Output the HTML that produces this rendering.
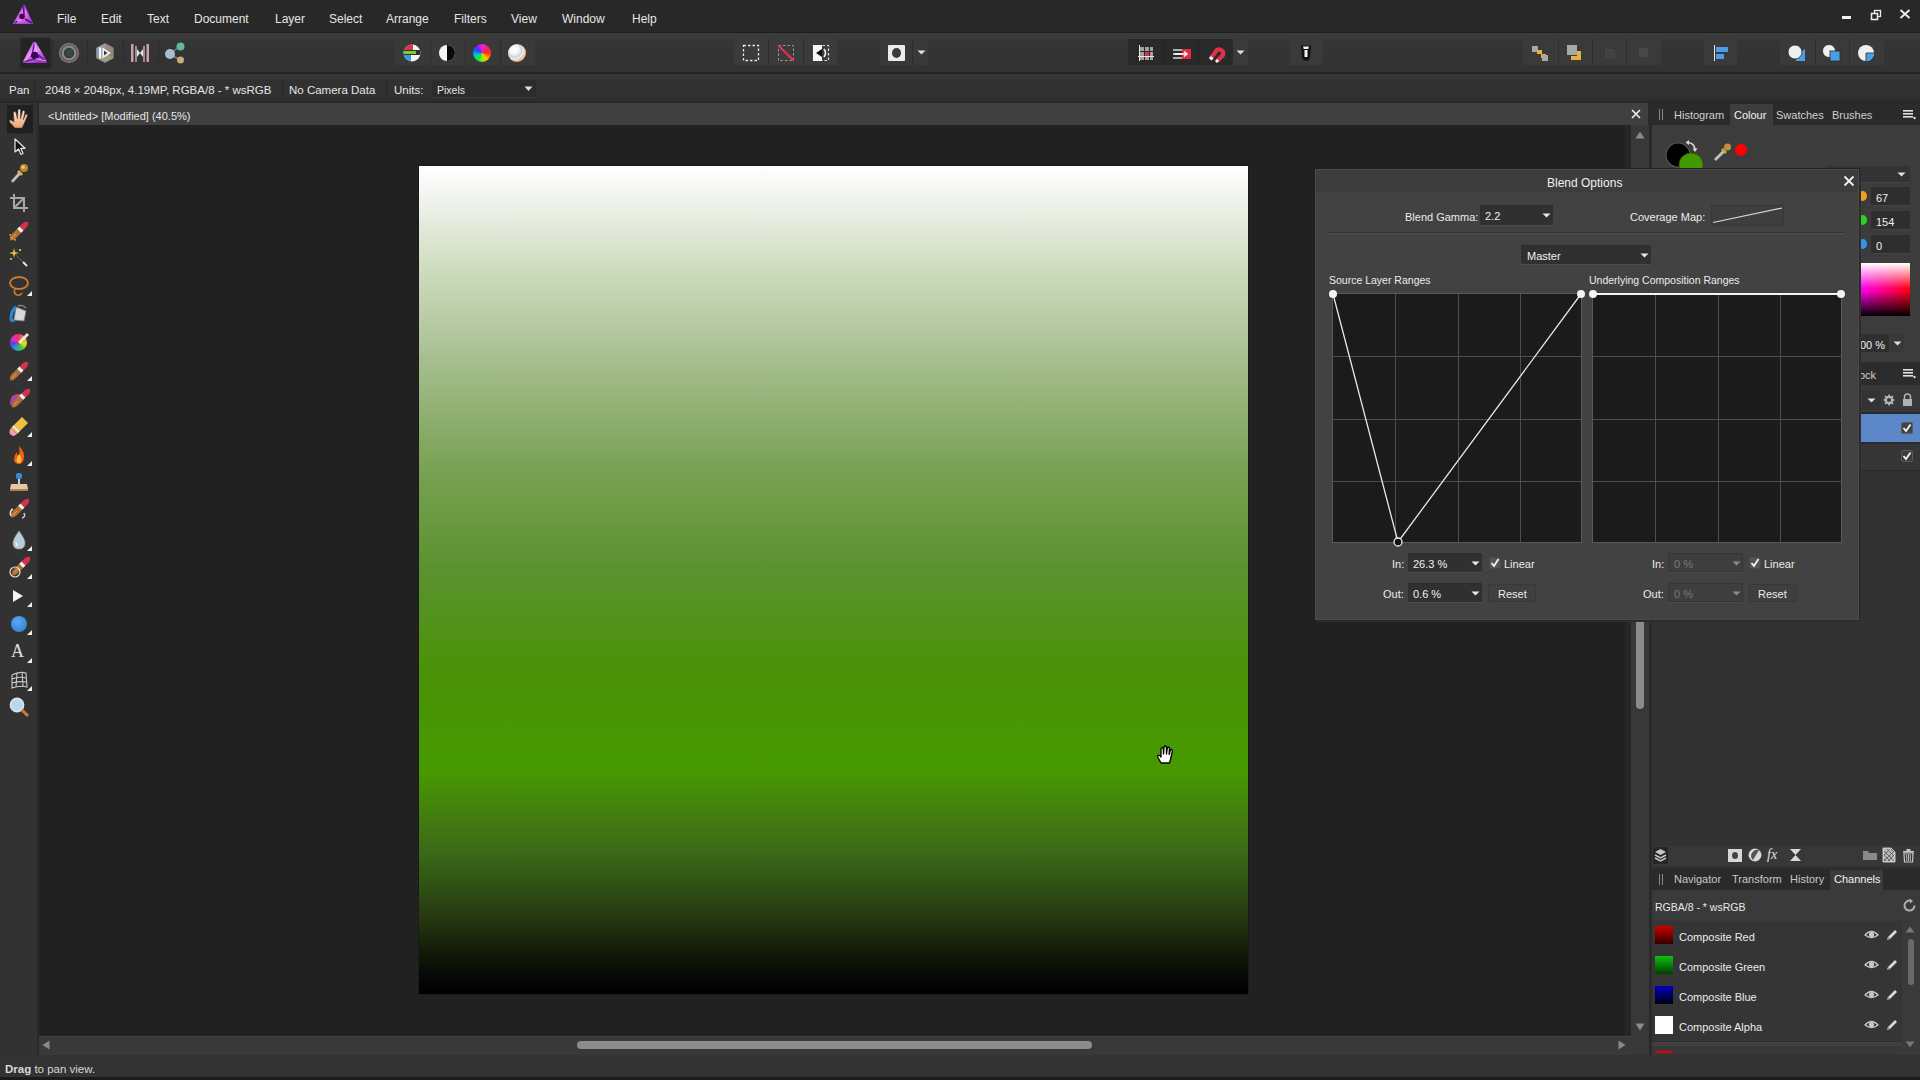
<!DOCTYPE html>
<html><head><meta charset="utf-8">
<style>
*{margin:0;padding:0;box-sizing:border-box}
html,body{width:1920px;height:1080px;overflow:hidden;background:#2b2b2b;font-family:"Liberation Sans",sans-serif;color:#e6e6e6}
.a{position:absolute}
.t{position:absolute;white-space:nowrap;line-height:20px;font-family:"Liberation Sans",sans-serif}
svg.a{overflow:visible}
</style></head><body>
<div class="a" style="left:0px;top:0px;width:1920px;height:32px;background:#282828;"></div>
<div class="a" style="left:0px;top:32px;width:1920px;height:1px;background:#1e1e1e;"></div>
<div class="a" style="left:0px;top:33px;width:1920px;height:40px;background:linear-gradient(#3a3a3a 0px,#3b3b3b 4px,#363636 8px,#343434 16px,#323232 40px);"></div>
<div class="a" style="left:0px;top:72px;width:1920px;height:2px;background:#232323;"></div>
<div class="a" style="left:0px;top:74px;width:1920px;height:28px;background:linear-gradient(#373737 0px,#363636 3px,#313131 6px,#313131 23px,#2c2c2c 26px,#2a2a2a 28px);"></div>
<div class="a" style="left:0px;top:102px;width:1920px;height:1px;background:#262626;"></div>
<div class="a" style="left:0px;top:103px;width:37px;height:952px;background:#323232;"></div>
<div class="a" style="left:37px;top:103px;width:2px;height:952px;background:#2a2a2a;"></div>
<div class="a" style="left:39px;top:103px;width:1609px;height:22px;background:#404040;"></div>
<div class="a" style="left:39px;top:125px;width:1586px;height:911px;background:#212121;"></div>
<div class="a" style="left:1625px;top:125px;width:6px;height:911px;background:#262626;"></div>
<div class="a" style="left:1631px;top:125px;width:18px;height:911px;background:#383838;"></div>
<div class="a" style="left:39px;top:1036px;width:1592px;height:19px;background:#393939;"></div>
<div class="a" style="left:1631px;top:1036px;width:18px;height:19px;background:#383838;"></div>
<div class="a" style="left:1649px;top:103px;width:3px;height:952px;background:#2a2a2a;"></div>
<div class="a" style="left:1652px;top:103px;width:268px;height:952px;background:#303030;"></div>
<div class="a" style="left:0px;top:1055px;width:1920px;height:22px;background:#333333;"></div>
<div class="a" style="left:0px;top:1077px;width:1920px;height:3px;background:#1b1b1b;"></div>
<div class="t" style="left:57px;top:9px;font-size:12px;color:#e6e6e6;font-weight:normal;">File</div>
<div class="t" style="left:101px;top:9px;font-size:12px;color:#e6e6e6;font-weight:normal;">Edit</div>
<div class="t" style="left:147px;top:9px;font-size:12px;color:#e6e6e6;font-weight:normal;">Text</div>
<div class="t" style="left:194px;top:9px;font-size:12px;color:#e6e6e6;font-weight:normal;">Document</div>
<div class="t" style="left:275px;top:9px;font-size:12px;color:#e6e6e6;font-weight:normal;">Layer</div>
<div class="t" style="left:329px;top:9px;font-size:12px;color:#e6e6e6;font-weight:normal;">Select</div>
<div class="t" style="left:386px;top:9px;font-size:12px;color:#e6e6e6;font-weight:normal;">Arrange</div>
<div class="t" style="left:454px;top:9px;font-size:12px;color:#e6e6e6;font-weight:normal;">Filters</div>
<div class="t" style="left:511px;top:9px;font-size:12px;color:#e6e6e6;font-weight:normal;">View</div>
<div class="t" style="left:562px;top:9px;font-size:12px;color:#e6e6e6;font-weight:normal;">Window</div>
<div class="t" style="left:632px;top:9px;font-size:12px;color:#e6e6e6;font-weight:normal;">Help</div>
<div class="t" style="left:9px;top:80px;font-size:11.5px;color:#e6e6e6;font-weight:normal;">Pan</div>
<div class="a" style="left:34px;top:80px;width:1px;height:19px;background:#262626;"></div>
<div class="t" style="left:45px;top:80px;font-size:11.5px;color:#e6e6e6;font-weight:normal;">2048 × 2048px, 4.19MP, RGBA/8 - * wsRGB</div>
<div class="a" style="left:282px;top:80px;width:1px;height:19px;background:#262626;"></div>
<div class="t" style="left:289px;top:80px;font-size:11.5px;color:#e6e6e6;font-weight:normal;">No Camera Data</div>
<div class="a" style="left:386px;top:80px;width:1px;height:19px;background:#262626;"></div>
<div class="t" style="left:394px;top:80px;font-size:11.5px;color:#e6e6e6;font-weight:normal;">Units:</div>
<div class="a" style="left:432px;top:80px;width:104px;height:18px;background:#2b2b2b;border-bottom:1px solid #3c3c3c"></div>
<div class="t" style="left:437px;top:80px;font-size:10.5px;color:#e6e6e6;font-weight:normal;">Pixels</div>
<svg class="a" style="left:524px;top:86px;" width="9" height="6" viewBox="0 0 9 6"><path d="M0.5 0.5 L8.5 0.5 L4.5 5 Z" fill="#e0e0e0"/></svg>
<div class="t" style="left:48px;top:106px;font-size:11px;color:#e6e6e6;font-weight:normal;">&lt;Untitled&gt; [Modified] (40.5%)</div>
<svg class="a" style="left:1631px;top:109px;" width="10" height="10" viewBox="0 0 10 10"><path d="M1 1 L9 9 M9 1 L1 9" stroke="#f0f0f0" stroke-width="1.6"/></svg>
<div class="t" style="left:5px;top:1059px;font-size:11.5px;color:#d8d8d8;font-weight:normal;"><b>Drag</b> to pan view.</div>
<div class="a" style="left:418px;top:165px;width:831px;height:830px;background:#1a1a1a;"></div>
<div class="a" style="left:419px;top:166px;width:829px;height:828px;background:linear-gradient(#ffffff 0%,#f4f6f2 3%,#cad9ba 13.4%,#a2bb8a 24.6%,#78a152 36.8%,#5b922f 48.6%,#4b9208 61.2%,#469a00 73%,#437a10 79.1%,#3a6a18 82.9%,#283e10 90%,#141c08 94.7%,#050805 98%,#000 100%);"></div>
<svg class="a" style="left:1156px;top:745px;" width="18" height="20" viewBox="0 0 18 20"><path d="M5 18 L2 12.5 Q1 10.5 2.5 10.3 Q3.7 10.2 5 12 L5 4 Q5 2.6 6.2 2.6 Q7.3 2.6 7.3 4 L7.5 9 L8 2.2 Q8.1 1 9.2 1 Q10.4 1 10.4 2.2 L10.5 9 L11.3 3 Q11.5 2 12.5 2.1 Q13.6 2.3 13.4 3.4 L13.2 9.5 L14.4 5.2 Q14.8 4.3 15.7 4.6 Q16.6 5 16.4 6 L14.6 14 L13.5 18 Z" fill="#fff" stroke="#000" stroke-width="1.3" stroke-linejoin="round"/></svg>
<svg class="a" style="left:1635px;top:131px;" width="10" height="8" viewBox="0 0 10 8"><path d="M0.5 7.5 L9.5 7.5 L5 0.5Z" fill="#8a8a8a"/></svg>
<div class="a" style="left:1636px;top:300px;width:8px;height:409px;background:#8c8c8c;border-radius:4px"></div>
<svg class="a" style="left:1635px;top:1023px;" width="10" height="8" viewBox="0 0 10 8"><path d="M0.5 0.5 L9.5 0.5 L5 7.5Z" fill="#8a8a8a"/></svg>
<div class="a" style="left:39px;top:1036px;width:1592px;height:1px;background:#444;"></div>
<svg class="a" style="left:42px;top:1040px;" width="8" height="10" viewBox="0 0 8 10"><path d="M7.5 0.5 L7.5 9.5 L0.5 5Z" fill="#8a8a8a"/></svg>
<div class="a" style="left:577px;top:1041px;width:515px;height:8px;background:#8c8c8c;border-radius:4px"></div>
<svg class="a" style="left:1618px;top:1040px;" width="8" height="10" viewBox="0 0 8 10"><path d="M0.5 0.5 L0.5 9.5 L7.5 5Z" fill="#8a8a8a"/></svg>
<svg class="a" style="left:12px;top:4px;" width="22" height="22" viewBox="0 0 22 22"><defs><linearGradient id="lg0" x1="0" y1="0" x2="1" y2="1"><stop offset="0" stop-color="#8a40e0"/><stop offset=".5" stop-color="#f078f0"/><stop offset="1" stop-color="#9030c0"/></linearGradient></defs><path d="M11.5 1.5 Q12 1 12.5 1.5 L20.5 19.5 L1.5 19.5 Z" fill="url(#lg0)" stroke="#a048e0" stroke-linejoin="round" stroke-width="1"/><path d="M3 19 L10 13 M11.5 2 L12 11 M20 19 L13 15" stroke="#5a1080" stroke-width="1.6"/><circle cx="10" cy="12.5" r="2.8" fill="#3a0048"/><path d="M5 17 L9 15" stroke="#ffb0ff" stroke-width="1.2"/></svg>
<div class="a" style="left:1842px;top:16px;width:9px;height:3px;background:#f2f2f2;"></div>
<svg class="a" style="left:1870px;top:9px;" width="12" height="12" viewBox="0 0 12 12"><rect x="4.5" y="1.5" width="6" height="6" fill="none" stroke="#eee" stroke-width="1.3"/><rect x="1.5" y="4.5" width="6" height="6" fill="#282828" stroke="#eee" stroke-width="1.5"/></svg>
<svg class="a" style="left:1899px;top:9px;" width="12" height="10" viewBox="0 0 12 10"><path d="M1.5 1 L10.5 9 M10.5 1 L1.5 9" stroke="#eee" stroke-width="1.8"/></svg>
<div class="a" style="left:21px;top:38px;width:29px;height:29px;background:#242424;box-shadow:0 1px 2px #1a1a1a"></div>
<div class="a" style="left:52px;top:40px;width:1px;height:26px;background:#2b2b2b;"></div>
<div class="a" style="left:87px;top:40px;width:1px;height:26px;background:#2b2b2b;"></div>
<div class="a" style="left:123px;top:40px;width:1px;height:26px;background:#2b2b2b;"></div>
<div class="a" style="left:158px;top:40px;width:1px;height:26px;background:#2b2b2b;"></div>
<svg class="a" style="left:22px;top:40px;" width="27" height="26" viewBox="0 0 27 26"><defs><linearGradient id="pp" x1="0" y1="0" x2="0.6" y2="1"><stop offset="0" stop-color="#b050e8"/><stop offset=".55" stop-color="#e488f6"/><stop offset="1" stop-color="#9a2cc8"/></linearGradient></defs><path d="M11 2.5 Q12.5 1 14 2.5 L25 21 Q25.5 23 23.5 23 L2.5 23 Q0.5 23 1.2 21 Z" fill="url(#pp)"/><path d="M12.5 2.5 L10 15.5 M24.5 22 L13 12 M1.8 22 L17 17.5" stroke="#6a1a90" stroke-width="1.4"/><path d="M12.5 3 L15 13 M24 21 L12 18 M2.5 21.5 L10 12" stroke="#f6c8ff" stroke-width="0.9" opacity=".85"/><path d="M10 12 L15 12 L17 17 L12 19.5 L8.5 16.5 Z" fill="#3c0658"/></svg>
<svg class="a" style="left:58px;top:42px;" width="22" height="22" viewBox="0 0 22 22"><circle cx="11" cy="11" r="9" fill="none" stroke="#8a6c6c" stroke-width="2.4" opacity=".9"/><circle cx="11" cy="11" r="6.3" fill="none" stroke="#7c9488" stroke-width="2.2"/><circle cx="11" cy="11" r="4" fill="#3a4548"/></svg>
<svg class="a" style="left:94px;top:42px;" width="22" height="22" viewBox="0 0 22 22"><path d="M11 1.5 L19.5 6 L19.5 16 L11 20.5 L2.5 16 L2.5 6 Z" fill="#8a8a70" stroke="#6e6e60" stroke-width="1"/><path d="M11 1.5 L19.5 6 L11 11 Z" fill="#a08488"/><path d="M2.5 6 L11 1.5 L11 11 L2.5 16Z" fill="#9898b8"/><path d="M11 11 L19.5 16 L11 20.5 L2.5 16Z" fill="#98a080"/><rect x="5" y="5.5" width="2.2" height="11" fill="#f4f4f4"/><path d="M8.5 5.5 L17 11 L8.5 16.5 Z" fill="#f4f4f4"/><path d="M10 8.5 L13.5 11 L10 13.5 Z" fill="#3a3a3a"/></svg>
<svg class="a" style="left:129px;top:42px;" width="22" height="22" viewBox="0 0 22 22"><rect x="2" y="2" width="2.5" height="18" fill="#c8a0a8"/><rect x="6" y="4" width="2" height="16" fill="#a08898"/><rect x="17.5" y="2" width="2.5" height="18" fill="#c8a0a8"/><rect x="14" y="4" width="2" height="16" fill="#a08898"/><path d="M8 7 L11 11 L8 15 Z M14 7 L11 11 L14 15Z" fill="#e8e8e8"/></svg>
<svg class="a" style="left:163px;top:42px;" width="22" height="22" viewBox="0 0 22 22"><path d="M7 12 L17 4 M7 12 L17 18" stroke="#70807c" stroke-width="1.5"/><circle cx="7" cy="12" r="5" fill="#a8c0cc"/><circle cx="17.5" cy="4.5" r="4" fill="#5fb8a0"/><circle cx="17.5" cy="18" r="3.5" fill="#c8aa78"/></svg>
<div class="a" style="left:395px;top:39px;width:140px;height:26px;background:#393939;"></div>
<div class="a" style="left:430px;top:39px;width:1px;height:26px;background:#2e2e2e;"></div>
<div class="a" style="left:465px;top:39px;width:1px;height:26px;background:#2e2e2e;"></div>
<div class="a" style="left:500px;top:39px;width:1px;height:26px;background:#2e2e2e;"></div>
<svg class="a" style="left:402px;top:43px;" width="20" height="20" viewBox="0 0 20 20"><defs><clipPath id="c1"><circle cx="10" cy="10" r="8.5"/></clipPath></defs><g clip-path="url(#c1)"><rect x="0" y="0" width="20" height="20" fill="#f4f4f4"/><rect x="0" y="0" width="11" height="7" fill="#e03050"/><rect x="0" y="7" width="20" height="5" fill="#303030"/><rect x="1" y="8" width="13" height="3" fill="#7ad030"/><rect x="0" y="12" width="9" height="8" fill="#3898e0"/></g></svg>
<svg class="a" style="left:437px;top:43px;" width="20" height="20" viewBox="0 0 20 20"><circle cx="10" cy="10" r="8" fill="#f6f6f6"/><path d="M10 2 A8 8 0 0 1 10 18 Z" fill="#0a0a0a"/></svg>
<div class="a" style="left:473px;top:44px;width:18px;height:18px;border-radius:50%;background:conic-gradient(from 0deg,#f020e0,#ff2060 50deg,#ff3010 90deg,#ffc000 140deg,#a0f000 170deg,#20e040 210deg,#00d0c0 250deg,#1060ff 290deg,#7020ff 320deg,#f020e0)"></div>
<div class="a" style="left:508px;top:44px;width:18px;height:18px;border-radius:50%;background:radial-gradient(circle at 35% 32%,#ffffff 0%,#f4f8fc 25%,#c0daf0 42%,#f6e6d8 55%,#e8a878 75%,#b86a38 100%)"></div>
<div class="a" style="left:734px;top:39px;width:103px;height:26px;background:#3b3b3b;"></div>
<div class="a" style="left:768px;top:39px;width:1px;height:26px;background:#2e2e2e;"></div>
<div class="a" style="left:803px;top:39px;width:1px;height:26px;background:#2e2e2e;"></div>
<svg class="a" style="left:742px;top:44px;" width="18" height="18" viewBox="0 0 18 18"><rect x="1.5" y="1.5" width="15" height="15" fill="none" stroke="#e8e8e8" stroke-width="1.3" stroke-dasharray="2.5 2"/></svg>
<svg class="a" style="left:777px;top:44px;" width="18" height="18" viewBox="0 0 18 18"><rect x="1.5" y="1.5" width="15" height="15" fill="none" stroke="#9a9a9a" stroke-width="1" stroke-dasharray="2.5 2"/><path d="M2 2 L16 16" stroke="#e03048" stroke-width="2.4" stroke-linecap="round"/></svg>
<svg class="a" style="left:812px;top:44px;" width="18" height="18" viewBox="0 0 18 18"><rect x="1.5" y="1.5" width="15" height="15" fill="none" stroke="#e0e0e0" stroke-width="1.2" stroke-dasharray="2.5 2"/><rect x="1" y="1" width="9" height="16" fill="#f6f6f6"/><path d="M10 5 L4 9 L10 13 Z" fill="#101010"/><path d="M12 5 Q15 9 12 13" fill="none" stroke="#f0f0f0" stroke-width="1.6"/></svg>
<div class="a" style="left:880px;top:39px;width:48px;height:26px;background:#393939;"></div>
<div class="a" style="left:912px;top:39px;width:1px;height:26px;background:#2e2e2e;"></div>
<div class="a" style="left:888px;top:45px;width:17px;height:16px;background:#ececec;border-radius:1px"></div>
<div class="a" style="left:892px;top:48px;width:9px;height:10px;background:#3a3a3a;border-radius:50%"></div>
<svg class="a" style="left:917px;top:50px;" width="9" height="5" viewBox="0 0 9 5"><path d="M0.5 0.5 L8.5 0.5 L4.5 4.5Z" fill="#e0e0e0"/></svg>
<div class="a" style="left:1128px;top:39px;width:105px;height:26px;background:#292929;"></div>
<div class="a" style="left:1163px;top:39px;width:1px;height:26px;background:#242424;"></div>
<div class="a" style="left:1198px;top:39px;width:1px;height:26px;background:#242424;"></div>
<div class="a" style="left:1233px;top:39px;width:15px;height:26px;background:#3a3a3a;"></div>
<svg class="a" style="left:1236px;top:50px;" width="9" height="5" viewBox="0 0 9 5"><path d="M0.5 0.5 L8.5 0.5 L4.5 4.5Z" fill="#e0e0e0"/></svg>
<svg class="a" style="left:1137px;top:44px;" width="18" height="18" viewBox="0 0 18 18"><rect x="3" y="3" width="4" height="4" fill="#a0a0a0"/><rect x="8" y="3" width="4" height="4" fill="#a0a0a0"/><rect x="13" y="3" width="3" height="4" fill="#a0a0a0"/><rect x="3" y="8" width="4" height="4" fill="#a0a0a0"/><rect x="8" y="8" width="4" height="4" fill="#e03040"/><rect x="13" y="8" width="3" height="4" fill="#a0a0a0"/><rect x="3" y="13" width="4" height="3" fill="#a0a0a0"/><rect x="8" y="13" width="4" height="3" fill="#a0a0a0"/><rect x="13" y="13" width="3" height="3" fill="#a0a0a0"/><path d="M1 12.5 L17 12.5 M2.5 1 L2.5 17" stroke="#e8e8e8" stroke-width="1"/></svg>
<svg class="a" style="left:1172px;top:44px;" width="20" height="18" viewBox="0 0 20 18"><rect x="1" y="5" width="9" height="2" fill="#b0b0b0"/><rect x="1" y="9" width="9" height="2" fill="#c0c0c0"/><rect x="1" y="13" width="9" height="2" fill="#b0b0b0"/><rect x="10" y="5" width="9" height="10" fill="#e03040"/><path d="M3 10 L15 10 M12 7.5 L15 10 L12 12.5" stroke="#fff" stroke-width="1.3" fill="none"/></svg>
<svg class="a" style="left:1207px;top:43px;" width="20" height="20" viewBox="0 0 20 20"><path d="M4 15 L10 7 A4.2 4.2 0 0 1 16 12 L10 18" fill="none" stroke="#e0304a" stroke-width="4.2"/><path d="M3 14 L5.5 16.5 M9 17 L11 19" stroke="#f0f0f0" stroke-width="3"/></svg>
<div class="a" style="left:1290px;top:39px;width:33px;height:26px;background:#3a3a3a;"></div>
<svg class="a" style="left:1299px;top:44px;" width="14" height="18" viewBox="0 0 14 18"><path d="M2 1.5 L12 1.5 L11 13 L9.5 16.5 L4.5 16.5 L3 13 Z" fill="#111"/><path d="M4 2.5 L10 2.5 L9.3 5 L4.7 5Z" fill="#f4f4f4"/><rect x="5.5" y="6" width="3" height="7" fill="#f4f4f4"/></svg>
<div class="a" style="left:1523px;top:39px;width:138px;height:26px;background:#3a3a3a;"></div>
<div class="a" style="left:1558px;top:39px;width:1px;height:26px;background:#2e2e2e;"></div>
<div class="a" style="left:1592px;top:39px;width:1px;height:26px;background:#2e2e2e;"></div>
<div class="a" style="left:1626px;top:39px;width:1px;height:26px;background:#2e2e2e;"></div>
<svg class="a" style="left:1530px;top:44px;" width="20" height="18" viewBox="0 0 20 18"><rect x="2" y="2" width="6" height="6" fill="#a8a8a8"/><path d="M7 6 L12 6 L12 10 L16 10 L16 14 L11 14 L11 10 L7 10Z" fill="#e8b040"/><rect x="12" y="11" width="6" height="6" fill="#a8a8a8"/></svg>
<svg class="a" style="left:1565px;top:44px;" width="20" height="18" viewBox="0 0 20 18"><rect x="2" y="1" width="10" height="10" fill="#a8a8a8"/><path d="M12 7 L16 7 L16 16 L6 16 L6 12 L12 12Z" fill="#e8b040"/></svg>
<svg class="a" style="left:1600px;top:44px;" width="20" height="18" viewBox="0 0 20 18"><rect x="5" y="5" width="9" height="9" fill="#454545"/><rect x="7" y="7" width="9" height="8" fill="#424242"/></svg>
<svg class="a" style="left:1635px;top:44px;" width="20" height="18" viewBox="0 0 20 18"><rect x="4" y="4" width="9" height="9" fill="#474747"/></svg>
<div class="a" style="left:1704px;top:39px;width:33px;height:26px;background:#3a3a3a;"></div>
<svg class="a" style="left:1711px;top:44px;" width="20" height="18" viewBox="0 0 20 18"><rect x="3" y="1" width="1" height="16" fill="#e8e8e8"/><rect x="5" y="3" width="12" height="5" fill="#4a9ee8"/><rect x="5" y="10" width="8" height="5" fill="#4a9ee8"/></svg>
<div class="a" style="left:1780px;top:39px;width:104px;height:26px;background:#3a3a3a;"></div>
<div class="a" style="left:1815px;top:39px;width:1px;height:26px;background:#2e2e2e;"></div>
<div class="a" style="left:1849px;top:39px;width:1px;height:26px;background:#2e2e2e;"></div>
<svg class="a" style="left:1786px;top:43px;" width="22" height="20" viewBox="0 0 22 20"><path d="M10 12 L19 6 L19 18 L10 18Z" fill="#4a9ee8"/><circle cx="9" cy="9" r="7" fill="#efefef" stroke="#2a2a2a" stroke-width="0.8"/></svg>
<svg class="a" style="left:1821px;top:43px;" width="22" height="20" viewBox="0 0 22 20"><circle cx="8" cy="8" r="6.5" fill="#efefef" stroke="#2a2a2a" stroke-width="0.8"/><rect x="9" y="8" width="10" height="10" fill="#4a9ee8" stroke="#2a2a2a" stroke-width="0.8"/></svg>
<svg class="a" style="left:1856px;top:43px;" width="22" height="20" viewBox="0 0 22 20"><circle cx="10" cy="10" r="8" fill="#efefef"/><path d="M10 10 L18 10 A8 8 0 0 1 10 18 Z" fill="#4a9ee8"/><path d="M10 10 L18 10 M10 10 L10 18" stroke="#2a2a2a" stroke-width="0.8"/></svg>
<div class="a" style="left:7px;top:105px;width:26px;height:28px;background:#202020;box-shadow:0 1px 0 #2a2a2a"></div>
<svg class="a" style="left:7px;top:108px;" width="22" height="22" viewBox="0 0 22 22"><defs><linearGradient id="hg" x1="0" y1="0" x2="0" y2="1"><stop offset="0" stop-color="#fff0e0"/><stop offset="1" stop-color="#e8a070"/></linearGradient></defs><path d="M8 20 L3 14.5 Q1.5 12.5 3 12 Q4.5 11.8 7 14 L6.5 5 Q6.5 3.5 7.6 3.5 Q8.7 3.5 9 5 L10.5 11 L11 2.5 Q11.2 1 12.3 1 Q13.4 1 13.4 2.5 L13.5 11 L15.5 3.5 Q16 2.3 17 2.6 Q18 3 17.7 4.3 L16.2 12 L18.5 6.8 Q19.2 5.8 20 6.3 Q20.8 6.9 20.3 8 L16.5 17 L15 20 Z" fill="url(#hg)" stroke="#5a3a28" stroke-width="0.5"/></svg>
<svg class="a" style="left:13px;top:138px;" width="14" height="18" viewBox="0 0 14 18"><path d="M2 1 L2 14 L5.5 11 L8 16.5 L10 15.5 L7.8 10.3 L12 10.3 Z" fill="#111" stroke="#e8e8e8" stroke-width="1.2" stroke-linejoin="round"/></svg>
<svg class="a" style="left:8px;top:162px;" width="22" height="22" viewBox="0 0 22 22"><path d="M3 19 L11 10 L13 12 L5 20.5 Z" fill="#c8c8c8" stroke="#888" stroke-width="0.6"/><path d="M10 9 L14 13" stroke="#d8b060" stroke-width="3"/><circle cx="16" cy="6" r="4" fill="#b88a30"/><circle cx="15.2" cy="5.2" r="1.6" fill="#f0d080"/></svg>
<svg class="a" style="left:9px;top:193px;" width="20" height="20" viewBox="0 0 20 20"><path d="M5 1 L5 15 L19 15 M1 5 L15 5 L15 19 M5 15 L15 5" fill="none" stroke="#a8a8a8" stroke-width="2"/></svg>
<svg class="a" style="left:8px;top:220px;" width="22" height="22" viewBox="0 0 22 22"><g transform="translate(0 0)"><path d="M15 3 Q18 1 20 2 Q21 4 19 7 L15.5 10.5 L11.5 6.5 Z" fill="#d83048"/><path d="M11.5 6.5 L15.5 10.5 L13 13 L9 9 Z" fill="#f0f0f0"/><path d="M9 9 L13 13 L8 18 Q5 21 2.5 20.5 Q1.5 19.5 2 17 Q3 14 6 12 Z" fill="#b07030"/><path d="M4 18 L8 14" stroke="#e0a060" stroke-width="1"/></g><path d="M2 14 A7 7 0 0 0 8 20" fill="none" stroke="#e0a040" stroke-width="1.4" stroke-dasharray="2 1.5"/></svg>
<svg class="a" style="left:8px;top:247px;" width="22" height="22" viewBox="0 0 22 22"><path d="M6 6 L19 19" stroke="#2a2a2a" stroke-width="3"/><path d="M6 6 L19 19" stroke="#505050" stroke-width="1.6"/><path d="M15 15 L19 19" stroke="#e8e8e8" stroke-width="2"/><path d="M6 1 L7 5 L11 6 L7 7 L6 11 L5 7 L1 6 L5 5 Z" fill="#f0c030"/><circle cx="12" cy="3" r="1" fill="#f8e080"/><circle cx="3" cy="12" r="0.9" fill="#f8e080"/></svg>
<svg class="a" style="left:8px;top:275px;" width="22" height="22" viewBox="0 0 22 22"><ellipse cx="11" cy="8" rx="9" ry="6" fill="none" stroke="#c87a30" stroke-width="2"/><path d="M7 13 Q5 18 9 20 Q12 21 14 18" fill="none" stroke="#c87a30" stroke-width="1.6"/></svg>
<svg class="a" style="left:27px;top:291px;" width="5" height="5" viewBox="0 0 5 5"><path d="M0 5 L5 0 L5 5Z" fill="#f0f0f0"/></svg>
<svg class="a" style="left:8px;top:303px;" width="22" height="22" viewBox="0 0 22 22"><path d="M8 4 L18 8 L16 18 L6 17 Z" fill="#d8d8d8" stroke="#808080" stroke-width="0.8"/><path d="M8 4 Q3 8 3 15 Q3 19 6 17" fill="none" stroke="#2a8ad8" stroke-width="3"/><path d="M10 3 Q14 1 18 5" fill="none" stroke="#909090" stroke-width="1.2"/></svg>
<div class="a" style="left:10px;top:334px;width:17px;height:17px;border-radius:50%;background:conic-gradient(#f03060,#f0a020,#e0e020,#40c040,#20a0e0,#6040e0,#e030c0,#f03060)"></div>
<svg class="a" style="left:8px;top:331px;" width="22" height="22" viewBox="0 0 22 22"><path d="M19 2 L21 4 L12 13 L10 11 Z" fill="#e8e8e8"/><path d="M10 11 L12 13 L9 15 L8 14Z" fill="#a06a30"/></svg>
<svg class="a" style="left:8px;top:360px;" width="22" height="22" viewBox="0 0 22 22"><g transform="translate(0 0)"><path d="M15 3 Q18 1 20 2 Q21 4 19 7 L15.5 10.5 L11.5 6.5 Z" fill="#d83048"/><path d="M11.5 6.5 L15.5 10.5 L13 13 L9 9 Z" fill="#f0f0f0"/><path d="M9 9 L13 13 L8 18 Q5 21 2.5 20.5 Q1.5 19.5 2 17 Q3 14 6 12 Z" fill="#b07030"/><path d="M4 18 L8 14" stroke="#e0a060" stroke-width="1"/></g></svg>
<svg class="a" style="left:27px;top:376px;" width="5" height="5" viewBox="0 0 5 5"><path d="M0 5 L5 0 L5 5Z" fill="#f0f0f0"/></svg>
<svg class="a" style="left:8px;top:388px;" width="22" height="22" viewBox="0 0 22 22"><path d="M2 16 Q2 6 10 6 Q14 6 12 10 Q6 10 6 17 Z" fill="#d04080"/><path d="M4 18 Q3 10 9 9" fill="none" stroke="#8050c0" stroke-width="2"/><g transform="translate(2 -1)"><path d="M15 3 Q18 1 20 2 Q21 4 19 7 L15.5 10.5 L11.5 6.5 Z" fill="#d83048"/><path d="M11.5 6.5 L15.5 10.5 L13 13 L9 9 Z" fill="#f0f0f0"/><path d="M9 9 L13 13 L8 18 Q5 21 2.5 20.5 Q1.5 19.5 2 17 Q3 14 6 12 Z" fill="#b07030"/><path d="M4 18 L8 14" stroke="#e0a060" stroke-width="1"/></g></svg>
<svg class="a" style="left:8px;top:415px;" width="22" height="22" viewBox="0 0 22 22"><path d="M14 2 L20 8 L9 19 L3 13 Z" fill="#f0c040"/><path d="M3 13 L9 19 L6 21 Q3 21 1.5 18 Q1 15 3 13Z" fill="#f0a0b0"/><path d="M5 11 L11 17" stroke="#e8e8e8" stroke-width="2"/></svg>
<svg class="a" style="left:27px;top:432px;" width="5" height="5" viewBox="0 0 5 5"><path d="M0 5 L5 0 L5 5Z" fill="#f0f0f0"/></svg>
<svg class="a" style="left:8px;top:444px;" width="22" height="22" viewBox="0 0 22 22"><path d="M11 2 Q17 8 16 14 Q15 20 11 20 Q6 20 6 15 Q6 11 9 8 Q9 12 11 12 Q12 7 11 2Z" fill="#f06010"/><path d="M11 10 Q14 13 13.5 16 Q13 19 11 19 Q8.5 19 8.5 16 Q9 13 11 10Z" fill="#f8c030"/></svg>
<svg class="a" style="left:27px;top:461px;" width="5" height="5" viewBox="0 0 5 5"><path d="M0 5 L5 0 L5 5Z" fill="#f0f0f0"/></svg>
<svg class="a" style="left:8px;top:471px;" width="22" height="22" viewBox="0 0 22 22"><rect x="8" y="2" width="6" height="6" rx="2" fill="#3a8ad0"/><rect x="10" y="8" width="2" height="5" fill="#d0d0d0"/><path d="M3 13 L19 13 L20 18 L2 18Z" fill="#e8c8a0"/><rect x="2" y="18" width="18" height="2" fill="#b08060"/></svg>
<svg class="a" style="left:8px;top:498px;" width="22" height="22" viewBox="0 0 22 22"><g transform="translate(1 -1)"><path d="M15 3 Q18 1 20 2 Q21 4 19 7 L15.5 10.5 L11.5 6.5 Z" fill="#d83048"/><path d="M11.5 6.5 L15.5 10.5 L13 13 L9 9 Z" fill="#f0f0f0"/><path d="M9 9 L13 13 L8 18 Q5 21 2.5 20.5 Q1.5 19.5 2 17 Q3 14 6 12 Z" fill="#b07030"/><path d="M4 18 L8 14" stroke="#e0a060" stroke-width="1"/></g><path d="M3 18 Q1 13 5 11" fill="none" stroke="#e0e0e0" stroke-width="1.5"/><path d="M16 15 Q18 19 14 20" fill="none" stroke="#d0d0d0" stroke-width="1.5"/></svg>
<svg class="a" style="left:8px;top:529px;" width="22" height="22" viewBox="0 0 22 22"><path d="M11 2 Q17 10 17 14 Q17 20 11 20 Q5 20 5 14 Q5 10 11 2Z" fill="#b8ccd8" stroke="#8aa0b0" stroke-width="0.6"/><path d="M8 13 Q8 16 10 17" fill="none" stroke="#f0f8ff" stroke-width="1.2"/></svg>
<svg class="a" style="left:27px;top:546px;" width="5" height="5" viewBox="0 0 5 5"><path d="M0 5 L5 0 L5 5Z" fill="#f0f0f0"/></svg>
<svg class="a" style="left:8px;top:557px;" width="22" height="22" viewBox="0 0 22 22"><g transform="translate(2 -2)"><path d="M15 3 Q18 1 20 2 Q21 4 19 7 L15.5 10.5 L11.5 6.5 Z" fill="#d83048"/><path d="M11.5 6.5 L15.5 10.5 L13 13 L9 9 Z" fill="#f0f0f0"/><path d="M9 9 L13 13 L8 18 Q5 21 2.5 20.5 Q1.5 19.5 2 17 Q3 14 6 12 Z" fill="#b07030"/><path d="M4 18 L8 14" stroke="#e0a060" stroke-width="1"/></g><circle cx="7" cy="15" r="5" fill="none" stroke="#e0e0e0" stroke-width="1.2"/></svg>
<svg class="a" style="left:27px;top:574px;" width="5" height="5" viewBox="0 0 5 5"><path d="M0 5 L5 0 L5 5Z" fill="#f0f0f0"/></svg>
<svg class="a" style="left:10px;top:588px;" width="16" height="16" viewBox="0 0 16 16"><path d="M3 2 L13 8 L3 14 Z" fill="#f4f4f4"/></svg>
<svg class="a" style="left:27px;top:602px;" width="5" height="5" viewBox="0 0 5 5"><path d="M0 5 L5 0 L5 5Z" fill="#f0f0f0"/></svg>
<div class="a" style="left:11px;top:616px;width:16px;height:16px;border-radius:50%;background:radial-gradient(circle at 40% 35%,#5aaaf0,#2a78c8)"></div>
<svg class="a" style="left:27px;top:630px;" width="5" height="5" viewBox="0 0 5 5"><path d="M0 5 L5 0 L5 5Z" fill="#f0f0f0"/></svg>
<div class="t" style="left:11px;top:641px;font-family:'Liberation Serif',serif;font-size:18px;line-height:20px;color:#e0e0e0">A</div>
<svg class="a" style="left:27px;top:658px;" width="5" height="5" viewBox="0 0 5 5"><path d="M0 5 L5 0 L5 5Z" fill="#f0f0f0"/></svg>
<svg class="a" style="left:8px;top:669px;" width="22" height="22" viewBox="0 0 22 22"><path d="M4 6 Q11 2 18 4 L19 18 Q12 16 4 19 Z M9 4 L8 18 M14 3.5 L15 17 M4 10 Q11 7 18 9 M4 14 Q11 12 19 13" fill="none" stroke="#c8c8c8" stroke-width="1.1"/></svg>
<svg class="a" style="left:27px;top:686px;" width="5" height="5" viewBox="0 0 5 5"><path d="M0 5 L5 0 L5 5Z" fill="#f0f0f0"/></svg>
<svg class="a" style="left:8px;top:696px;" width="22" height="22" viewBox="0 0 22 22"><circle cx="9" cy="9" r="6.5" fill="#b8d8f0" stroke="#e0e0e0" stroke-width="1.8"/><path d="M14 14 L20 20" stroke="#c08040" stroke-width="3"/></svg>
<div class="a" style="left:1652px;top:103px;width:268px;height:22px;background:#2a2a2a;"></div>
<div class="a" style="left:1659px;top:109px;width:1px;height:11px;background:#8a8a8a;"></div>
<div class="a" style="left:1662px;top:109px;width:1px;height:11px;background:#8a8a8a;"></div>
<div class="a" style="left:1730px;top:104px;width:43px;height:21px;background:#3d3d3d;"></div>
<div class="t" style="left:1674px;top:105px;font-size:11px;color:#d0d0d0;font-weight:normal;">Histogram</div>
<div class="t" style="left:1734px;top:105px;font-size:11px;color:#f4f4f4;font-weight:normal;">Colour</div>
<div class="t" style="left:1776px;top:105px;font-size:11px;color:#d0d0d0;font-weight:normal;">Swatches</div>
<div class="t" style="left:1832px;top:105px;font-size:11px;color:#d0d0d0;font-weight:normal;">Brushes</div>
<svg class="a" style="left:1903px;top:110px;" width="13" height="10" viewBox="0 0 13 10"><rect x="0" y="0" width="10" height="1.6" fill="#e0e0e0"/><rect x="0" y="3" width="10" height="1.6" fill="#e0e0e0"/><rect x="0" y="6" width="10" height="1.6" fill="#e0e0e0"/><circle cx="11.5" cy="8" r="1.2" fill="#e0e0e0"/></svg>
<div class="a" style="left:1652px;top:125px;width:268px;height:237px;background:#3c3c3c;"></div>
<svg class="a" style="left:1664px;top:138px;" width="40" height="36" viewBox="0 0 40 36"><circle cx="14" cy="17" r="12" fill="#000" stroke="#555" stroke-width="1.2"/><circle cx="27" cy="27" r="12" fill="#439a00" stroke="#2a5a00" stroke-width="0.8"/><path d="M24 4.5 Q30 5 31 11" fill="none" stroke="#d8d8d8" stroke-width="1.6"/><path d="M21.5 4.5 L25 2 L25 7 Z M28.5 10.5 L33.5 10.5 L31 14Z" fill="#d8d8d8"/></svg>
<svg class="a" style="left:1712px;top:140px;" width="20" height="22" viewBox="0 0 20 22"><path d="M2 19 L11 10 L13 12 L4 21 Z" fill="#c0c0c0"/><path d="M10 9 L14 13" stroke="#d0a850" stroke-width="3"/><circle cx="15.5" cy="7" r="3.5" fill="#c09040"/></svg>
<div class="a" style="left:1735px;top:144px;width:12px;height:12px;background:#ff0000;border-radius:50%"></div>
<div class="a" style="left:1826px;top:166px;width:84px;height:17px;background:#333;border-bottom:1px solid #444"></div>
<svg class="a" style="left:1897px;top:172px;" width="9" height="5" viewBox="0 0 9 5"><path d="M0.5 0.5 L8.5 0.5 L4.5 4.5Z" fill="#e0e0e0"/></svg>
<div class="a" style="left:1858px;top:191px;width:9px;height:10px;background:#f0a020;border-radius:50%"></div>
<div class="a" style="left:1871px;top:187px;width:39px;height:19px;background:#2e2e2e;border-radius:2px;border-bottom:1px solid #454545"></div>
<div class="t" style="left:1876px;top:188px;font-size:11px;color:#f0f0f0;font-weight:normal;">67</div>
<div class="a" style="left:1858px;top:215px;width:9px;height:10px;background:#30d020;border-radius:50%"></div>
<div class="a" style="left:1871px;top:211px;width:39px;height:19px;background:#2e2e2e;border-radius:2px;border-bottom:1px solid #454545"></div>
<div class="t" style="left:1876px;top:212px;font-size:11px;color:#f0f0f0;font-weight:normal;">154</div>
<div class="a" style="left:1858px;top:239px;width:9px;height:10px;background:#3a90f0;border-radius:50%"></div>
<div class="a" style="left:1871px;top:235px;width:39px;height:19px;background:#2e2e2e;border-radius:2px;border-bottom:1px solid #454545"></div>
<div class="t" style="left:1876px;top:236px;font-size:11px;color:#f0f0f0;font-weight:normal;">0</div>
<div class="a" style="left:1858px;top:263px;width:52px;height:53px;background:linear-gradient(to bottom,#fff 0%,rgba(255,255,255,0) 48%,rgba(0,0,0,0) 52%,#000 100%),linear-gradient(to right,#ff00ff,#ff0010);"></div>
<div class="a" style="left:1858px;top:334px;width:31px;height:18px;background:#2e2e2e;"></div>
<div class="t" style="left:1860px;top:335px;font-size:11px;color:#f0f0f0;font-weight:normal;">00 %</div>
<div class="a" style="left:1890px;top:334px;width:14px;height:18px;background:#383838;"></div>
<svg class="a" style="left:1893px;top:341px;" width="9" height="5" viewBox="0 0 9 5"><path d="M0.5 0.5 L8.5 0.5 L4.5 4.5Z" fill="#e0e0e0"/></svg>
<div class="a" style="left:1652px;top:362px;width:268px;height:23px;background:#2c2c2c;"></div>
<div class="t" style="left:1859px;top:365px;font-size:11px;color:#d0d0d0;font-weight:normal;">ock</div>
<svg class="a" style="left:1903px;top:369px;" width="13" height="10" viewBox="0 0 13 10"><rect x="0" y="0" width="10" height="1.6" fill="#e0e0e0"/><rect x="0" y="3" width="10" height="1.6" fill="#e0e0e0"/><rect x="0" y="6" width="10" height="1.6" fill="#e0e0e0"/><circle cx="11.5" cy="8" r="1.2" fill="#e0e0e0"/></svg>
<div class="a" style="left:1652px;top:385px;width:268px;height:27px;background:#383838;"></div>
<div class="a" style="left:1862px;top:391px;width:18px;height:19px;background:#333;"></div>
<svg class="a" style="left:1867px;top:398px;" width="9" height="5" viewBox="0 0 9 5"><path d="M0.5 0.5 L8.5 0.5 L4.5 4.5Z" fill="#e0e0e0"/></svg>
<svg class="a" style="left:1883px;top:394px;" width="12" height="12" viewBox="0 0 12 12"><circle cx="6" cy="6" r="3.2" fill="none" stroke="#b8b8b8" stroke-width="2.2"/><path d="M6 0.5 L6 2.5 M6 9.5 L6 11.5 M0.5 6 L2.5 6 M9.5 6 L11.5 6 M2 2 L3.4 3.4 M8.6 8.6 L10 10 M2 10 L3.4 8.6 M8.6 3.4 L10 2" stroke="#b8b8b8" stroke-width="1.6"/></svg>
<svg class="a" style="left:1902px;top:393px;" width="11" height="14" viewBox="0 0 11 14"><path d="M2.5 6 L2.5 4 A3 3 0 0 1 8.5 4 L8.5 6" fill="none" stroke="#b0b0b0" stroke-width="1.5"/><rect x="1" y="6" width="9" height="7" fill="#b0b0b0"/></svg>
<div class="a" style="left:1652px;top:412px;width:268px;height:2px;background:#2a2a2a;"></div>
<div class="a" style="left:1652px;top:414px;width:268px;height:28px;background:#5b87c8;"></div>
<svg class="a" style="left:1901px;top:422px;" width="12" height="12" viewBox="0 0 12 12"><rect x="0.5" y="0.5" width="11" height="11" rx="1.5" fill="#444" stroke="#5a5a5a" stroke-width="1"/><path d="M2.5 6 L5 9 L9.5 2.5" fill="none" stroke="#f4f4f4" stroke-width="1.8"/></svg>
<div class="a" style="left:1652px;top:442px;width:268px;height:2px;background:#2a2a2a;"></div>
<div class="a" style="left:1652px;top:444px;width:268px;height:26px;background:#353535;"></div>
<svg class="a" style="left:1901px;top:450px;" width="12" height="12" viewBox="0 0 12 12"><rect x="0.5" y="0.5" width="11" height="11" rx="1.5" fill="#3c3c3c" stroke="#5a5a5a" stroke-width="1"/><path d="M2.5 6 L5 9 L9.5 2.5" fill="none" stroke="#f4f4f4" stroke-width="1.8"/></svg>
<div class="a" style="left:1652px;top:470px;width:268px;height:1px;background:#2a2a2a;"></div>
<div class="a" style="left:1652px;top:471px;width:268px;height:375px;background:#323232;"></div>
<div class="a" style="left:1652px;top:846px;width:268px;height:20px;background:#383838;"></div>
<div class="a" style="left:1653px;top:847px;width:15px;height:17px;background:#262626;"></div>
<svg class="a" style="left:1654px;top:848px;" width="13" height="14" viewBox="0 0 13 14"><path d="M6.5 1 L12 4 L6.5 7 L1 4Z" fill="#c8c8c8"/><path d="M1 7 L6.5 10 L12 7 M1 10 L6.5 13 L12 10" fill="none" stroke="#c8c8c8" stroke-width="1.5"/></svg>
<div class="a" style="left:1728px;top:849px;width:14px;height:13px;background:#d8d8d8;"></div>
<div class="a" style="left:1732px;top:852px;width:6px;height:7px;background:#444;border-radius:50%"></div>
<svg class="a" style="left:1748px;top:848px;" width="14" height="14" viewBox="0 0 14 14"><circle cx="7" cy="7" r="6" fill="#d8d8d8" stroke="#eee" stroke-width="0.8"/><path d="M11 2 L5 12 A6 6 0 0 1 11 2Z" fill="#555"/></svg>
<div class="t" style="left:1767px;top:845px;font-family:'Liberation Serif',serif;font-style:italic;font-size:14px;line-height:20px;color:#e0e0e0">fx</div>
<svg class="a" style="left:1789px;top:848px;" width="13" height="14" viewBox="0 0 13 14"><path d="M1 1 L12 1 L6.5 7 L12 13 L1 13 L6.5 7Z" fill="#d8d8d8"/></svg>
<svg class="a" style="left:1862px;top:849px;" width="16" height="12" viewBox="0 0 16 12"><path d="M1 2 L6 2 L7 4 L15 4 L15 11 L1 11Z" fill="#8a8a8a"/></svg>
<svg class="a" style="left:1882px;top:847px;" width="14" height="16" viewBox="0 0 14 16"><path d="M1 1 L9 1 L13 5 L13 15 L1 15Z" fill="#b8b8b8" stroke="#ddd" stroke-width="0.8"/><path d="M2 4 L12 14 M2 8 L8 14 M5 2 L12 9 M9 2 L12 5 M2 12 L4 14 M12 4 L2 14 M12 8 L6 14 M8 2 L2 8" stroke="#555" stroke-width="0.8"/></svg>
<svg class="a" style="left:1902px;top:848px;" width="13" height="15" viewBox="0 0 13 15"><rect x="1" y="3" width="11" height="1.5" fill="#c8c8c8"/><rect x="4.5" y="1" width="4" height="2" fill="#c8c8c8"/><path d="M2 5 L11 5 L10.5 14 L2.5 14Z" fill="none" stroke="#c8c8c8" stroke-width="1.2"/><path d="M4.7 6 L4.7 13 M6.5 6 L6.5 13 M8.3 6 L8.3 13" stroke="#c8c8c8" stroke-width="0.9"/></svg>
<div class="a" style="left:1652px;top:866px;width:268px;height:3px;background:#303030;"></div>
<div class="a" style="left:1652px;top:869px;width:268px;height:21px;background:#2a2a2a;"></div>
<div class="a" style="left:1659px;top:874px;width:1px;height:11px;background:#8a8a8a;"></div>
<div class="a" style="left:1662px;top:874px;width:1px;height:11px;background:#8a8a8a;"></div>
<div class="a" style="left:1830px;top:870px;width:53px;height:20px;background:#3a3a3a;"></div>
<div class="t" style="left:1674px;top:869px;font-size:11px;color:#c8c8c8;font-weight:normal;">Navigator</div>
<div class="t" style="left:1732px;top:869px;font-size:11px;color:#c8c8c8;font-weight:normal;">Transform</div>
<div class="t" style="left:1790px;top:869px;font-size:11px;color:#c8c8c8;font-weight:normal;">History</div>
<div class="t" style="left:1834px;top:869px;font-size:11px;color:#f4f4f4;font-weight:normal;">Channels</div>
<div class="a" style="left:1652px;top:890px;width:268px;height:165px;background:#3a3a3a;"></div>
<div class="t" style="left:1655px;top:897px;font-size:10.5px;color:#e8e8e8;font-weight:normal;">RGBA/8 - * wsRGB</div>
<svg class="a" style="left:1902px;top:898px;" width="15" height="15" viewBox="0 0 15 15"><path d="M12.5 7.5 A5 5 0 1 1 9 2.8" fill="none" stroke="#b0b0b0" stroke-width="2"/><path d="M7.5 0.5 L11 3 L8 5.5Z" fill="#b0b0b0"/></svg>
<div class="a" style="left:1652px;top:921px;width:250px;height:120px;background:#353535;"></div>
<div class="a" style="left:1655px;top:926px;width:18px;height:18px;background:linear-gradient(#d00000,#300000);"></div>
<div class="t" style="left:1679px;top:927px;font-size:11px;color:#ececec;font-weight:normal;">Composite Red</div>
<svg class="a" style="left:1864px;top:929px;" width="15" height="12" viewBox="0 0 15 12"><path d="M1 6 Q7.5 -1 14 6 Q7.5 11 1 6Z" fill="none" stroke="#c8c8c8" stroke-width="1.3"/><circle cx="7.5" cy="5.5" r="2.6" fill="#c8c8c8"/></svg>
<svg class="a" style="left:1885px;top:928px;" width="14" height="14" viewBox="0 0 14 14"><path d="M2 12 L3 9 L10 2 L12 4 L5 11 Z" fill="#d8d8d8"/><path d="M2 12 L3 9 L5 11Z" fill="#888"/></svg>
<div class="a" style="left:1655px;top:956px;width:18px;height:18px;background:linear-gradient(#10c010,#004000);"></div>
<div class="t" style="left:1679px;top:957px;font-size:11px;color:#ececec;font-weight:normal;">Composite Green</div>
<svg class="a" style="left:1864px;top:959px;" width="15" height="12" viewBox="0 0 15 12"><path d="M1 6 Q7.5 -1 14 6 Q7.5 11 1 6Z" fill="none" stroke="#c8c8c8" stroke-width="1.3"/><circle cx="7.5" cy="5.5" r="2.6" fill="#c8c8c8"/></svg>
<svg class="a" style="left:1885px;top:958px;" width="14" height="14" viewBox="0 0 14 14"><path d="M2 12 L3 9 L10 2 L12 4 L5 11 Z" fill="#d8d8d8"/><path d="M2 12 L3 9 L5 11Z" fill="#888"/></svg>
<div class="a" style="left:1655px;top:986px;width:18px;height:18px;background:linear-gradient(#0000c0,#000010);"></div>
<div class="t" style="left:1679px;top:987px;font-size:11px;color:#ececec;font-weight:normal;">Composite Blue</div>
<svg class="a" style="left:1864px;top:989px;" width="15" height="12" viewBox="0 0 15 12"><path d="M1 6 Q7.5 -1 14 6 Q7.5 11 1 6Z" fill="none" stroke="#c8c8c8" stroke-width="1.3"/><circle cx="7.5" cy="5.5" r="2.6" fill="#c8c8c8"/></svg>
<svg class="a" style="left:1885px;top:988px;" width="14" height="14" viewBox="0 0 14 14"><path d="M2 12 L3 9 L10 2 L12 4 L5 11 Z" fill="#d8d8d8"/><path d="M2 12 L3 9 L5 11Z" fill="#888"/></svg>
<div class="a" style="left:1655px;top:1016px;width:18px;height:18px;background:#ffffff;"></div>
<div class="t" style="left:1679px;top:1017px;font-size:11px;color:#ececec;font-weight:normal;">Composite Alpha</div>
<svg class="a" style="left:1864px;top:1019px;" width="15" height="12" viewBox="0 0 15 12"><path d="M1 6 Q7.5 -1 14 6 Q7.5 11 1 6Z" fill="none" stroke="#c8c8c8" stroke-width="1.3"/><circle cx="7.5" cy="5.5" r="2.6" fill="#c8c8c8"/></svg>
<svg class="a" style="left:1885px;top:1018px;" width="14" height="14" viewBox="0 0 14 14"><path d="M2 12 L3 9 L10 2 L12 4 L5 11 Z" fill="#d8d8d8"/><path d="M2 12 L3 9 L5 11Z" fill="#888"/></svg>
<div class="a" style="left:1652px;top:1041px;width:250px;height:1px;background:#2e2e2e;"></div>
<div class="a" style="left:1652px;top:1042px;width:250px;height:4px;background:#404040;"></div>
<div class="a" style="left:1652px;top:1046px;width:250px;height:9px;background:#383838;"></div>
<div class="a" style="left:1656px;top:1051px;width:17px;height:2px;background:#e00000;"></div>
<div class="a" style="left:1902px;top:921px;width:18px;height:134px;background:#3a3a3a;"></div>
<svg class="a" style="left:1905px;top:926px;" width="10" height="7" viewBox="0 0 10 7"><path d="M0.5 6.5 L9.5 6.5 L5 0.5Z" fill="#777"/></svg>
<div class="a" style="left:1908px;top:939px;width:6px;height:46px;background:#6a6a6a;border-radius:3px"></div>
<svg class="a" style="left:1905px;top:1041px;" width="10" height="7" viewBox="0 0 10 7"><path d="M0.5 0.5 L9.5 0.5 L5 6.5Z" fill="#777"/></svg>
<div class="a" style="left:1313px;top:168px;width:547px;height:453px;background:#202020;"></div>
<div class="a" style="left:1315px;top:169px;width:544px;height:451px;background:#424242;border:1px solid #4a4a4a;box-shadow:1px 1px 0 #292929,2px 2px 0 #2f2f2f"></div>
<div class="a" style="left:1316px;top:170px;width:542px;height:22px;background:#3d3d3d;"></div>
<div class="t" style="left:1547px;top:173px;font-size:12px;color:#f0f0f0;font-weight:normal;">Blend Options</div>
<svg class="a" style="left:1843px;top:175px;" width="12" height="12" viewBox="0 0 12 12"><path d="M1.5 1.5 L10.5 10.5 M10.5 1.5 L1.5 10.5" stroke="#f0f0f0" stroke-width="1.8"/></svg>
<div class="t" style="left:1405px;top:207px;font-size:11px;color:#ececec;font-weight:normal;">Blend Gamma:</div>
<div class="a" style="left:1480px;top:205px;width:73px;height:20px;background:#303030;border-radius:2px;box-shadow:inset 0 1px 0 #2a2a2a"></div>
<div class="a" style="left:1480px;top:225px;width:73px;height:1px;background:#4c4c4c;"></div>
<div class="t" style="left:1485px;top:206px;font-size:11px;color:#f0f0f0;font-weight:normal;">2.2</div>
<svg class="a" style="left:1542px;top:213px;" width="9" height="5" viewBox="0 0 9 5"><path d="M0.5 0.5 L8.5 0.5 L4.5 4.5Z" fill="#e8e8e8"/></svg>
<div class="t" style="left:1630px;top:207px;font-size:11px;color:#ececec;font-weight:normal;">Coverage Map:</div>
<div class="a" style="left:1711px;top:205px;width:73px;height:21px;background:#3e3e3e;border:1px solid #383838"></div>
<svg class="a" style="left:1711px;top:205px;" width="73" height="21" viewBox="0 0 73 21"><path d="M2 17.5 L71 3" stroke="#d8d8d8" stroke-width="1.2"/></svg>
<div class="a" style="left:1328px;top:232px;width:517px;height:1px;background:#333333;"></div>
<div class="a" style="left:1328px;top:233px;width:517px;height:1px;background:#4d4d4d;"></div>
<div class="a" style="left:1521px;top:245px;width:130px;height:19px;background:#303030;border-radius:2px;box-shadow:inset 0 1px 0 #2a2a2a"></div>
<div class="a" style="left:1521px;top:264px;width:130px;height:1px;background:#4c4c4c;"></div>
<div class="t" style="left:1527px;top:246px;font-size:11px;color:#f0f0f0;font-weight:normal;">Master</div>
<svg class="a" style="left:1640px;top:253px;" width="9" height="5" viewBox="0 0 9 5"><path d="M0.5 0.5 L8.5 0.5 L4.5 4.5Z" fill="#e8e8e8"/></svg>
<div class="t" style="left:1329px;top:270px;font-size:10.5px;color:#ececec;font-weight:normal;">Source Layer Ranges</div>
<div class="t" style="left:1589px;top:270px;font-size:10.5px;color:#ececec;font-weight:normal;">Underlying Composition Ranges</div>
<div class="a" style="left:1332px;top:293px;width:250px;height:250px;background:#1b1b1b;"></div>
<svg class="a" style="left:1332px;top:293px;" width="250" height="250" viewBox="0 0 250 250"><path d="M63.5 0 L63.5 250 M0 63.5 L250 63.5" stroke="#4e4e4e" stroke-width="1"/><path d="M126.5 0 L126.5 250 M0 126.5 L250 126.5" stroke="#4e4e4e" stroke-width="1"/><path d="M188.5 0 L188.5 250 M0 188.5 L250 188.5" stroke="#4e4e4e" stroke-width="1"/><rect x="0.5" y="0.5" width="249" height="249" fill="none" stroke="#5a5a5a" stroke-width="1"/><path d="M1 1 L66 249 L249 1" fill="none" stroke="#e8e8e8" stroke-width="1.3"/><circle cx="1" cy="1" r="4" fill="#f4f4f4"/><circle cx="249" cy="1" r="4" fill="#f4f4f4"/><circle cx="66" cy="249" r="4" fill="#111" stroke="#f0f0f0" stroke-width="1.3"/></svg>
<div class="a" style="left:1592px;top:293px;width:250px;height:250px;background:#1b1b1b;"></div>
<svg class="a" style="left:1592px;top:293px;" width="250" height="250" viewBox="0 0 250 250"><path d="M63.5 0 L63.5 250 M0 63.5 L250 63.5" stroke="#4e4e4e" stroke-width="1"/><path d="M126.5 0 L126.5 250 M0 126.5 L250 126.5" stroke="#4e4e4e" stroke-width="1"/><path d="M188.5 0 L188.5 250 M0 188.5 L250 188.5" stroke="#4e4e4e" stroke-width="1"/><rect x="0.5" y="0.5" width="249" height="249" fill="none" stroke="#5a5a5a" stroke-width="1"/><path d="M1 1 L249 1" stroke="#f4f4f4" stroke-width="2"/><circle cx="1" cy="1" r="4" fill="#f4f4f4"/><circle cx="249" cy="1" r="4" fill="#f4f4f4"/></svg>
<div class="t" style="left:1392px;top:554px;font-size:11px;color:#ececec;font-weight:normal;">In:</div>
<div class="a" style="left:1408px;top:553px;width:74px;height:19px;background:#303030;border-radius:2px;box-shadow:inset 0 1px 0 #2a2a2a"></div>
<div class="a" style="left:1408px;top:572px;width:74px;height:1px;background:#4c4c4c;"></div>
<div class="t" style="left:1413px;top:554px;font-size:11px;color:#f0f0f0;font-weight:normal;">26.3 %</div>
<svg class="a" style="left:1471px;top:561px;" width="9" height="5" viewBox="0 0 9 5"><path d="M0.5 0.5 L8.5 0.5 L4.5 4.5Z" fill="#e8e8e8"/></svg>
<svg class="a" style="left:1489px;top:557px;" width="12" height="12" viewBox="0 0 12 12"><rect x="0.5" y="0.5" width="11" height="11" rx="1.5" fill="#555" stroke="#4a4a4a"/><path d="M2.5 6 L5 9 L9.5 2" fill="none" stroke="#f4f4f4" stroke-width="1.8"/></svg>
<div class="t" style="left:1504px;top:554px;font-size:11px;color:#ececec;font-weight:normal;">Linear</div>
<div class="t" style="left:1383px;top:584px;font-size:11px;color:#ececec;font-weight:normal;">Out:</div>
<div class="a" style="left:1408px;top:583px;width:74px;height:19px;background:#303030;border-radius:2px;box-shadow:inset 0 1px 0 #2a2a2a"></div>
<div class="a" style="left:1408px;top:602px;width:74px;height:1px;background:#4c4c4c;"></div>
<div class="t" style="left:1413px;top:584px;font-size:11px;color:#f0f0f0;font-weight:normal;">0.6 %</div>
<svg class="a" style="left:1471px;top:591px;" width="9" height="5" viewBox="0 0 9 5"><path d="M0.5 0.5 L8.5 0.5 L4.5 4.5Z" fill="#e8e8e8"/></svg>
<div class="a" style="left:1488px;top:584px;width:48px;height:18px;background:#3f3f3f;border:1px solid #383838;border-radius:2px"></div>
<div class="t" style="left:1498px;top:584px;font-size:11px;color:#ececec;font-weight:normal;">Reset</div>
<div class="t" style="left:1652px;top:554px;font-size:11px;color:#ececec;font-weight:normal;">In:</div>
<div class="a" style="left:1668px;top:553px;width:75px;height:19px;background:#3e3e3e;border:1px solid #353535;border-radius:2px"></div>
<div class="a" style="left:1668px;top:572px;width:75px;height:1px;background:#4a4a4a;"></div>
<div class="t" style="left:1674px;top:554px;font-size:11px;color:#7a7a7a;font-weight:normal;">0 %</div>
<svg class="a" style="left:1732px;top:561px;" width="9" height="5" viewBox="0 0 9 5"><path d="M0.5 0.5 L8.5 0.5 L4.5 4.5Z" fill="#8a8a8a"/></svg>
<svg class="a" style="left:1749px;top:557px;" width="12" height="12" viewBox="0 0 12 12"><rect x="0.5" y="0.5" width="11" height="11" rx="1.5" fill="#555" stroke="#4a4a4a"/><path d="M2.5 6 L5 9 L9.5 2" fill="none" stroke="#f4f4f4" stroke-width="1.8"/></svg>
<div class="t" style="left:1764px;top:554px;font-size:11px;color:#ececec;font-weight:normal;">Linear</div>
<div class="t" style="left:1643px;top:584px;font-size:11px;color:#ececec;font-weight:normal;">Out:</div>
<div class="a" style="left:1668px;top:583px;width:75px;height:19px;background:#3e3e3e;border:1px solid #353535;border-radius:2px"></div>
<div class="a" style="left:1668px;top:602px;width:75px;height:1px;background:#4a4a4a;"></div>
<div class="t" style="left:1674px;top:584px;font-size:11px;color:#7a7a7a;font-weight:normal;">0 %</div>
<svg class="a" style="left:1732px;top:591px;" width="9" height="5" viewBox="0 0 9 5"><path d="M0.5 0.5 L8.5 0.5 L4.5 4.5Z" fill="#8a8a8a"/></svg>
<div class="a" style="left:1749px;top:584px;width:48px;height:18px;background:#3f3f3f;border:1px solid #383838;border-radius:2px"></div>
<div class="t" style="left:1758px;top:584px;font-size:11px;color:#ececec;font-weight:normal;">Reset</div>
</body></html>
